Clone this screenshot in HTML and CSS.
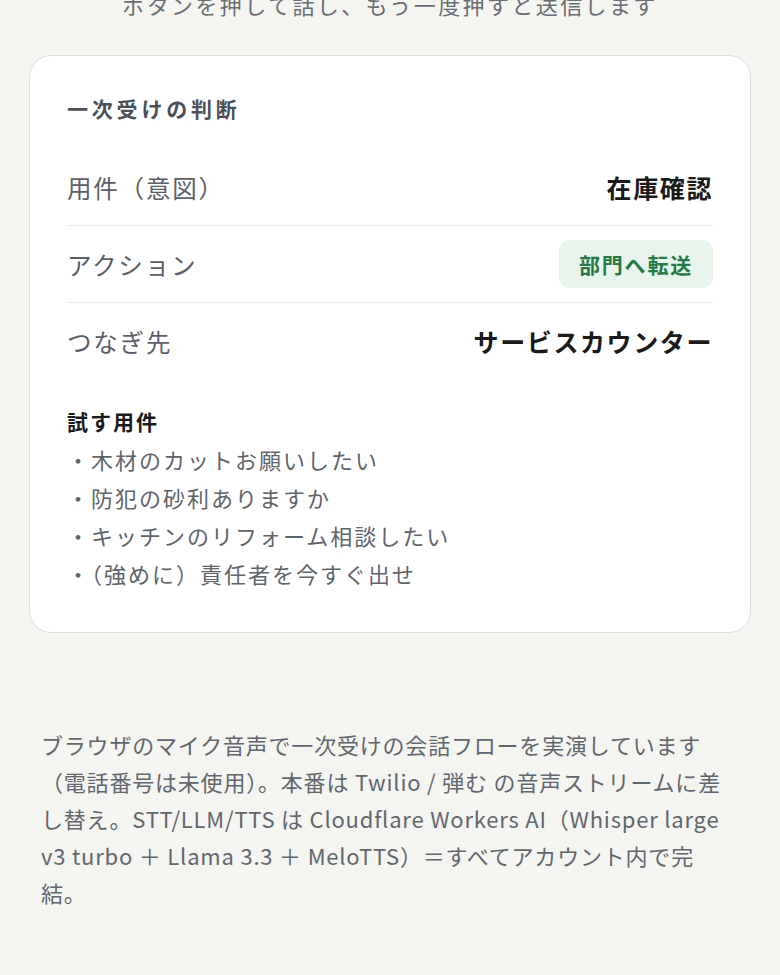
FILE: index.html
```html
<!DOCTYPE html>
<html lang="ja">
<head>
    <meta charset="UTF-8">
    <meta name="viewport" content="width=device-width, initial-scale=1.0">
    <title>一次受けデモ</title>
    <link rel="stylesheet" href="styles.css">
</head>
<body>
    <p class="hint">ボタンを押して話し、もう一度押すと送信します</p>

    <div class="card">
        <h2 class="card-title">一次受けの判断</h2>

        <div class="row">
            <span class="label">用件（意図）</span>
            <span class="value">在庫確認</span>
        </div>
        <div class="row">
            <span class="label">アクション</span>
            <span class="badge">部門へ転送</span>
        </div>
        <div class="row">
            <span class="label">つなぎ先</span>
            <span class="value">サービスカウンター</span>
        </div>

        <h3 class="try-title">試す用件</h3>
        <ul class="try-list">
            <li>・木材のカットお願いしたい</li>
            <li>・防犯の砂利ありますか</li>
            <li>・キッチンのリフォーム相談したい</li>
            <li>・（強めに）責任者を今すぐ出せ</li>
        </ul>
    </div>

    <p class="note">ブラウザのマイク音声で一次受けの会話フローを実演しています（電話番号は未使用）。本番は Twilio / 弾む の音声ストリームに差し替え。STT/LLM/TTS は Cloudflare Workers AI（Whisper large v3 turbo ＋ Llama 3.3 ＋ MeloTTS）＝すべてアカウント内で完結。</p>
</body>
</html>
```

FILE: styles.css
```css
body {
    margin: 0;
    background: #f4f4f1;
    font-family: "Noto Sans CJK JP", sans-serif;
    color: #1c1c1c;
}
.hint {
    margin: -14px 0 33px;
    text-align: center;
    font-size: 22px;
    line-height: 36px;
    letter-spacing: 2.4px;
    color: #6a6e74;
}
.card {
    margin: 0 29px;
    background: white;
    border: 1.5px solid #dcdde1;
    border-radius: 22px;
    padding: 37px 37px 40px;
}
.card-title {
    margin: 0 0 26px;
    font-size: 21px;
    line-height: 30px;
    font-weight: 700;
    letter-spacing: 3.8px;
    color: #4b5058;
}
.row {
    display: flex;
    justify-content: space-between;
    align-items: center;
    min-height: 48px;
    padding: 14px 0;
    border-bottom: 1.5px solid #ececec;
}
.row:last-of-type { border-bottom: none; }
.label {
    font-size: 24.5px;
    letter-spacing: 1.8px;
    color: #5b6068;
}
.value {
    font-size: 25px;
    font-weight: 700;
    letter-spacing: 1.6px;
    color: #1a1a1a;
}
.badge {
    background: #e8f4ec;
    color: #247a48;
    font-size: 21px;
    font-weight: 700;
    letter-spacing: 1.8px;
    line-height: 48px;
    padding: 0 20px;
    border-radius: 10px;
}
.try-title {
    margin: 23px 0 0;
    font-size: 21px;
    line-height: 38px;
    font-weight: 700;
    letter-spacing: 2px;
    color: #1a1a1a;
}
.try-list {
    margin: 0;
    padding: 0;
    list-style: none;
    font-size: 22px;
    line-height: 38px;
    letter-spacing: 2px;
    color: #5f646b;
}
.note {
    margin: 93px 41px 0;
    font-size: 22px;
    line-height: 37px;
    letter-spacing: 0.8px;
    color: #62666d;
}
```
